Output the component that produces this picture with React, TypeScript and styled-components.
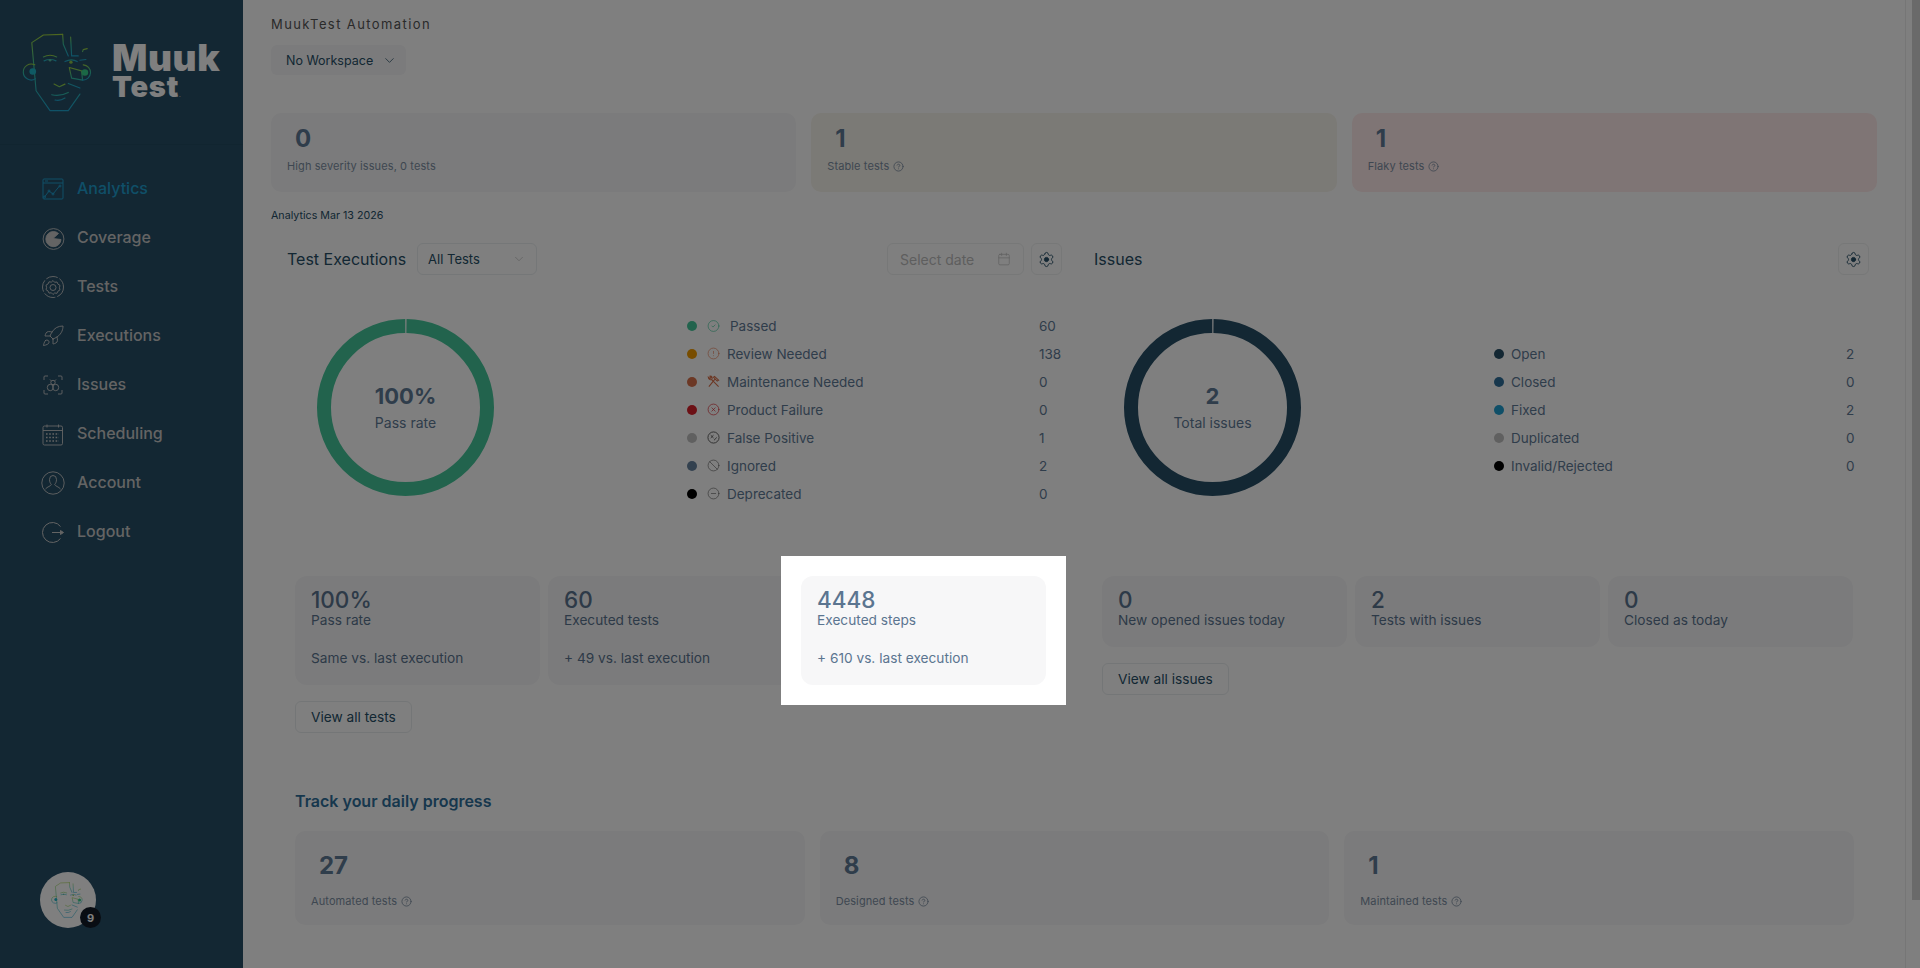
import React from 'react';
import styled, { createGlobalStyle } from 'styled-components';
import { Ban, Calendar, ChevronDown, CircleAlert, CircleCheck, CircleHelp, CircleMinus, CircleX, Rocket, Settings } from 'lucide-react';

const GlobalStyle = createGlobalStyle`
  html, body { margin: 0; height: 100%; overflow: hidden; background: #fff; }
  body { font-family: Inter, "Liberation Sans", sans-serif; color: #264e66; }
  * { box-sizing: border-box; }
`;

const FaceLogo = ({ width, height }: { width: number; height: number }) => (
  <svg width={width} height={height} viewBox="66 96 225 238" fill="none" strokeWidth="3.4" strokeLinecap="round" strokeLinejoin="round">
    <defs>
      <linearGradient id="faceStroke" x1="0" y1="0" x2="0" y2="1">
        <stop offset="0" stopColor="#9ccf3f" />
        <stop offset="0.45" stopColor="#37c3a0" />
        <stop offset="1" stopColor="#1ea5d0" />
      </linearGradient>
    </defs>
    <g stroke="url(#faceStroke)">
      <path d="M188 100 L130 102 L95 125 L108 270 L150 330 L205 330 L240 280" />
      <path d="M188 100 L190 130 L205 165 M212 108 L215 165 L235 165" />
      <path d="M248 152 L250 146 L262 143 M240 178 L258 176" />
      <path d="M208 200 L245 210 L248 238 L215 232 Z M205 248 L240 262" />
      <path d="M130 168 Q150 158 170 168 M132 180 Q150 172 168 180 M195 182 Q215 172 232 182" />
      <path d="M162 250 L178 258 L195 250 M155 282 Q180 288 205 275 M165 298 Q180 302 195 292" />
      <path d="M104 192 A24 24 0 1 0 106 234 M250 192 A23 23 0 1 1 248 238" />
    </g>
    <circle cx="98" cy="212" r="10" fill="#1fb5c9" />
    <circle cx="255" cy="215" r="10" fill="#37d18d" />
    <circle cx="150" cy="178" r="4" fill="#58bfa0" />
    <circle cx="213" cy="184" r="5" fill="#8fc24a" />
  </svg>
);

const AnalyticsIcon = () => (
  <svg width="24" height="24" viewBox="0 0 24 24" fill="none" stroke="currentColor" strokeWidth="1">
    <rect x="2" y="2" width="20" height="20" rx="1" />
    <path d="M2 6h20M4 4h3" />
    <path d="M3.5 20 L8 14 L12 17 L18.5 9" />
    <circle cx="8" cy="14" r="1" /><circle cx="12" cy="17" r="1" /><circle cx="19" cy="9" r="1" /><circle cx="3.5" cy="20" r="1" />
  </svg>
);
const CoverageIcon = () => (
  <svg width="24" height="24" viewBox="0 0 24 24" stroke="currentColor" strokeWidth="0.9" fill="none">
    <circle cx="12.5" cy="13" r="10.4" />
    <path d="M12.500 5.500 A7.600 7.600 0 1 0 20 13.500 L12 12.500 L17.500 7.500 A7.600 7.600 0 0 0 12.500 5.500Z" fill="currentColor" />
  </svg>
);
const TestsIcon = () => (
  <svg width="24" height="24" viewBox="0 0 24 24" fill="none" stroke="currentColor" strokeWidth="0.9">
    <circle cx="12" cy="12" r="10.5" strokeDasharray="12 2" />
    <path d="M12 5.500l1.600 1.800 2.400-.3 1 2.200 2 1.200-.6 2.300.6 2.200-2 1.200-1 2.200-2.400-.3L12 19.500l-1.600-1.700-2.400.3-1-2.200-2-1.200.6-2.200-.6-2.300 2-1.200 1-2.200 2.400.3z" />
    <circle cx="12" cy="12.500" r="3" />
  </svg>
);
const IssuesIcon = () => (
  <svg width="24" height="24" viewBox="0 0 24 24" fill="none" stroke="currentColor" strokeWidth="0.9">
    <path d="M3 7V4a1 1 0 0 1 1-1h3M17 3h3a1 1 0 0 1 1 1v3M21 17v3a1 1 0 0 1-1 1h-3M7 21H4a1 1 0 0 1-1-1v-3" />
    <circle cx="12" cy="9.500" r="2.200" />
    <ellipse cx="9.300" cy="14.500" rx="3" ry="3.200" /><ellipse cx="14.700" cy="14.500" rx="3" ry="3.200" />
    <path d="M9 6.500l1.300 1.400M15 6.500l-1.300 1.400" />
  </svg>
);
const CalendarIcon = () => (
  <svg width="24" height="24" viewBox="0 0 24 24" fill="none" stroke="currentColor" strokeWidth="0.9">
    <rect x="2" y="4" width="19.500" height="19" rx="1.500" />
    <path d="M2 8.500h19.500M6 2.500v3M17.500 2.500v3" />
    <path d="M5 12h13M5 15.500h13M5 19h13" strokeDasharray="1.600 1.600" strokeWidth="1.500" />
  </svg>
);
const AccountIcon = () => (
  <svg width="24" height="24" viewBox="0 0 24 24" fill="none" stroke="currentColor" strokeWidth="0.9">
    <circle cx="12" cy="12" r="11.200" />
    <path d="M8.500 8.500a3.500 4 0 0 1 7 0c0 2.500-1 4-1.800 5 .1 1.500 4.300 2.300 5.800 4.500M8.500 8.500c0 2.500 1 4 1.800 5 -.1 1.500-4.300 2.300-5.800 4.500" />
  </svg>
);
const LogoutIcon = () => (
  <svg width="24" height="24" viewBox="0 0 24 24" fill="none" stroke="currentColor" strokeWidth="1">
    <path d="M19.500 6.500A10 10 0 1 0 19.500 18.500" />
    <path d="M11 12.500h11" /><path d="M19.500 10.500l3 2-3 2z" fill="currentColor" />
  </svg>
);
const WrenchIcon = () => (
  <svg width="13" height="13" viewBox="0 0 14 14" fill="none" stroke="currentColor" strokeWidth="1.200">
    <path d="M2 12.500L9 4M8 1.500l4.500 4-1.500 1-4-4z" />
    <path d="M12.500 12.500L5 5M5 5C3.500 5.500 1.800 4.500 1.500 2.500L3.200 3.700 4.300 2.800 3.200 1.300C5 1 6.500 3 5 5z" />
  </svg>
);
const FalsePositiveIcon = () => (
  <svg width="13" height="13" viewBox="0 0 14 14" fill="none" stroke="currentColor" strokeWidth="1">
    <circle cx="7" cy="7" r="6" />
    <path d="M4 4.500l3 3M7 4.500l-3 3M7.500 10l3-3M8 7.500l.1.100M10 9.900l.1.100" />
  </svg>
);

const Shell = styled.div`
  display: flex;
  height: 100vh;
`;

const Sidebar = styled.aside`
  width: 243px;
  flex: none;
  display: flex;
  flex-direction: column;
  background: #264e66;
`;

const Brand = styled.div`
  height: 145px;
  display: flex;
  align-items: flex-start;
  gap: 15px;
  padding: 33px 0 0 22px;
  border-bottom: 1px solid #234a61;
`;

const BrandName = styled.div`
  display: flex;
  flex-direction: column;
  padding-top: 7px;
  color: #fff;
  font-family: Inter, sans-serif;
  font-weight: 900;
`;

const BrandTop = styled.span`
  font-size: 37px;
  line-height: 36px;
  letter-spacing: 0.6px;
`;

const BrandBottom = styled.span`
  font-size: 29px;
  line-height: 21px;
  letter-spacing: 0.8px;
  sup { font-size: 6px; font-weight: 400; letter-spacing: 0; vertical-align: baseline; }
`;

const Nav = styled.nav`
  display: flex;
  flex-direction: column;
  padding: 18px 0 0 41px;
`;

const NavItem = styled.a<{ $active?: boolean }>`
  height: 49px;
  display: flex;
  align-items: center;
  gap: 12px;
  font-size: 16px;
  font-weight: 500;
  color: ${p => (p.$active ? '#1f9fd0' : '#c8c8c8')};
  svg { flex: none; margin-top: 3px; }
`;

const AvatarWrap = styled.div`
  position: relative;
  width: 56px;
  height: 56px;
  margin: auto 0 40px 40px;
  border-radius: 50%;
  background: #fff;
  display: flex;
  align-items: center;
  justify-content: center;
`;

const AvatarBadge = styled.span`
  position: absolute;
  right: -5px;
  bottom: 0;
  width: 21px;
  height: 21px;
  border-radius: 50%;
  background: #131a26;
  color: #fff;
  font-size: 11px;
  font-weight: 700;
  display: flex;
  align-items: center;
  justify-content: center;
`;

const Main = styled.main`
  flex: 1;
  min-width: 0;
  display: flex;
  overflow: hidden;
`;

const Content = styled.div`
  flex: 1;
  min-width: 0;
  padding: 16px 28px 0;
`;

const ScrollRail = styled.div`
  width: 15px;
  flex: none;
  display: flex;
  justify-content: flex-end;
  border-left: 1px solid #ececec;
`;

const ScrollThumb = styled.div`
  width: 8px;
  height: 900px;
  background: #d4d4d4;
`;

const OrgName = styled.div`
  font-size: 13px;
  line-height: 16px;
  letter-spacing: 1.4px;
  color: #555;
`;

const WorkspaceButton = styled.button`
  margin-top: 13px;
  width: 135px;
  height: 30px;
  padding: 0 0 0 15px;
  display: flex;
  align-items: center;
  gap: 9px;
  border: none;
  border-radius: 6px;
  background: #f7f7f8;
  color: #264e66;
  font-family: inherit;
  font-size: 12.5px;
  white-space: nowrap;
`;

const SummaryRow = styled.div`
  margin-top: 38px;
  display: grid;
  grid-template-columns: repeat(3, 1fr);
  gap: 15px;
`;

const SummaryCard = styled.div<{ $tone?: string }>`
  height: 79px;
  padding: 12px 16px 0;
  border-radius: 10px;
  background: ${p => p.$tone || '#f7f7f8'};
`;

const BigNumber = styled.div`
  padding-left: 8px;
  font-size: 24px;
  line-height: 27px;
  font-weight: 700;
  color: #5f7a96;
`;

const TinyLabel = styled.div<{ $gap: number }>`
  margin-top: ${p => p.$gap}px;
  display: flex;
  align-items: center;
  gap: 4px;
  font-size: 11px;
  line-height: 14px;
  letter-spacing: 0.1px;
  color: #7d8fa3;
  svg { flex: none; }
`;

const DateNote = styled.div`
  margin-top: 16px;
  font-size: 10.7px;
  line-height: 16px;
  color: #264e66;
`;

const Panels = styled.div`
  margin: 8px -8px 0 0;
  display: grid;
  grid-template-columns: 1fr 1fr;
`;

const Panel = styled.section`
  min-height: 528px;
  padding: 11px 16px;
`;

const PanelHead = styled.div`
  display: flex;
  align-items: center;
  height: 32px;
`;

const PanelTitle = styled.h2`
  margin: 0;
  font-size: 16px;
  font-weight: 400;
  color: #264e66;
`;

const SelectBox = styled.div`
  margin-left: 11px;
  width: 120px;
  height: 32px;
  padding: 0 10px;
  display: flex;
  align-items: center;
  justify-content: space-between;
  border: 1px solid #eaeef0;
  border-radius: 6px;
  font-size: 13px;
  color: #264e66;
  svg { color: #bbb; }
`;

const DateBox = styled.div`
  margin-left: auto;
  width: 137px;
  height: 32px;
  padding: 0 12px;
  display: flex;
  align-items: center;
  justify-content: space-between;
  border: 1px solid #eef0f0;
  border-radius: 6px;
  font-size: 14px;
  color: #bdbdbd;
  svg { color: #bdbdbd; }
`;

const GearButton = styled.button<{ $push?: boolean }>`
  margin-left: ${p => (p.$push ? 'auto' : '7px')};
  width: 31px;
  height: 32px;
  padding: 0;
  display: flex;
  align-items: center;
  justify-content: center;
  border: 1px solid #eef0f0;
  border-radius: 6px;
  background: transparent;
  color: #264e66;
  circle { fill: currentColor; }
`;

const ChartRow = styled.div`
  margin-top: 44px;
  display: grid;
  grid-template-columns: 400px 1fr;
  grid-template-rows: 177px;
`;

const DonutWrap = styled.div`
  position: relative;
  width: 177px;
  height: 177px;
  margin-left: 30px;
`;

const DonutCenter = styled.div`
  position: absolute;
  inset: 0 0 1px;
  display: flex;
  flex-direction: column;
  align-items: center;
  justify-content: center;
`;

const DonutValue = styled.div`
  font-size: 22px;
  line-height: 28px;
  font-weight: 700;
  color: #5f7a96;
`;

const DonutLabel = styled.div`
  font-size: 14px;
  line-height: 20px;
  margin-top: 3px;
  color: #5f7a96;
`;

const Legend = styled.div`
  height: 177px;
  display: flex;
  flex-direction: column;
  justify-content: center;
  padding-top: 4px;
`;

const LegendRow = styled.div`
  height: 28px;
  flex: none;
  display: flex;
  align-items: center;
  font-size: 13.5px;
  color: #5f7a96;
`;

const Dot = styled.span<{ $color: string }>`
  width: 10px;
  height: 10px;
  flex: none;
  border-radius: 50%;
  background: ${p => p.$color};
`;

const StatusIcon = styled.span<{ $color: string }>`
  width: 13px;
  margin-left: 10px;
  flex: none;
  display: flex;
  color: ${p => p.$color};
`;

const LegendName = styled.span<{ $gap?: number }>`
  margin-left: ${p => p.$gap ?? 7}px;
`;

const LegendValue = styled.span`
  margin-left: auto;
  width: 23px;
  flex: none;
  white-space: nowrap;
`;

const StatGrid = styled.div`
  margin-top: 80px;
  padding: 0 16px 0 8px;
  display: grid;
  grid-template-columns: repeat(3, 1fr);
  gap: 8px;
`;

const StatCard = styled.div<{ $raised?: boolean }>`
  padding: 13px 16px 18px;
  border-radius: 12px;
  background: #f7f7f8;
  color: #5b7590;
  ${p => p.$raised && 'position: relative; z-index: 1002;'}
`;

const StatNumber = styled.div`
  font-size: 22.5px;
  line-height: 22px;
  font-weight: 500;
`;

const StatLabel = styled.div`
  font-size: 13.7px;
  line-height: 18px;
`;

const StatDelta = styled.div`
  margin-top: 20px;
  font-size: 13.7px;
  line-height: 18px;
`;

const OutlineButton = styled.button`
  margin: 16px 0 0 8px;
  height: 32px;
  padding: 0 15px;
  border: 1px solid #e9edef;
  border-radius: 6px;
  background: transparent;
  color: #264e66;
  font-family: inherit;
  font-size: 13.7px;
`;

const TrackSection = styled.section`
  padding: 31px 23px 0 24px;
`;

const TrackTitle = styled.h3`
  margin: 0;
  font-size: 16px;
  line-height: 20px;
  font-weight: 600;
  color: #2f6f9b;
`;

const TrackGrid = styled.div`
  margin-top: 20px;
  display: grid;
  grid-template-columns: repeat(3, 1fr);
  gap: 15px;
`;

const TrackCard = styled.div`
  height: 94px;
  padding: 21px 16px 0;
  border-radius: 10px;
  background: #f7f7f8;
`;

const Spotlight = styled.div`
  position: fixed;
  left: 781px;
  top: 556px;
  width: 285px;
  height: 149px;
  background: #fff;
  box-shadow: 0 0 0 3000px rgba(0, 0, 0, 0.5);
  z-index: 1001;
`;

const navItems = [
  { label: 'Analytics', icon: <AnalyticsIcon />, active: true },
  { label: 'Coverage', icon: <CoverageIcon /> },
  { label: 'Tests', icon: <TestsIcon /> },
  { label: 'Executions', icon: <Rocket size={24} strokeWidth={0.9} /> },
  { label: 'Issues', icon: <IssuesIcon /> },
  { label: 'Scheduling', icon: <CalendarIcon /> },
  { label: 'Account', icon: <AccountIcon /> },
  { label: 'Logout', icon: <LogoutIcon /> },
];

const testLegend = [
  { name: 'Passed', value: '60', dot: '#45c79a', tint: '#45c79a', gap: 10, icon: <CircleCheck size={14} strokeWidth={1.2} /> },
  { name: 'Review Needed', value: '138', dot: '#f09a00', tint: '#e8805a', icon: <CircleAlert size={13} strokeWidth={1.2} /> },
  { name: 'Maintenance Needed', value: '0', dot: '#d9714a', tint: '#d9714a', icon: <WrenchIcon /> },
  { name: 'Product Failure', value: '0', dot: '#d9202a', tint: '#d9202a', icon: <CircleX size={13} strokeWidth={1.2} /> },
  { name: 'False Positive', value: '1', dot: '#c0c0c0', tint: '#5a5a5a', icon: <FalsePositiveIcon /> },
  { name: 'Ignored', value: '2', dot: '#66829f', tint: '#5a5a5a', icon: <Ban size={13} strokeWidth={1.1} /> },
  { name: 'Deprecated', value: '0', dot: '#000', tint: '#5a5a5a', icon: <CircleMinus size={13} strokeWidth={1.1} /> },
];

const issueLegend = [
  { name: 'Open', value: '2', dot: '#264e66' },
  { name: 'Closed', value: '0', dot: '#2f6f9b' },
  { name: 'Fixed', value: '2', dot: '#1f9fd0' },
  { name: 'Duplicated', value: '0', dot: '#c0c0c0' },
  { name: 'Invalid/Rejected', value: '0', dot: '#000' },
];

const testStats = [
  { number: '100%', label: 'Pass rate', delta: 'Same vs. last execution' },
  { number: '60', label: 'Executed tests', delta: '+ 49 vs. last execution' },
  { number: '4448', label: 'Executed steps', delta: '+ 610 vs. last execution', raised: true },
];

const issueStats = [
  { number: '0', label: 'New opened issues today' },
  { number: '2', label: 'Tests with issues' },
  { number: '0', label: 'Closed as today' },
];

const track = [
  { number: '27', label: 'Automated tests' },
  { number: '8', label: 'Designed tests' },
  { number: '1', label: 'Maintained tests' },
];

const Donut = ({ color, value, label }: { color: string; value: string; label: string }) => (
  <DonutWrap>
    <svg width="177" height="177" viewBox="0 0 177 177">
      <circle cx="88.5" cy="88.5" r="81.5" fill="none" stroke={color} strokeWidth="14" strokeDasharray="510 2.08" strokeDashoffset="-1" transform="rotate(-90 88.5 88.5)" />
    </svg>
    <DonutCenter>
      <DonutValue>{value}</DonutValue>
      <DonutLabel>{label}</DonutLabel>
    </DonutCenter>
  </DonutWrap>
);

export default function App() {
  return (
    <Shell>
      <GlobalStyle />
      <Sidebar>
        <Brand>
          <FaceLogo width={75} height={79} />
          <BrandName>
            <BrandTop>Muuk</BrandTop>
            <BrandBottom>Test<sup>.</sup></BrandBottom>
          </BrandName>
        </Brand>
        <Nav>
          {navItems.map(item => (
            <NavItem key={item.label} $active={item.active}>
              {item.icon}
              {item.label}
            </NavItem>
          ))}
        </Nav>
        <AvatarWrap>
          <FaceLogo width={34} height={36} />
          <AvatarBadge>9</AvatarBadge>
        </AvatarWrap>
      </Sidebar>

      <Main>
        <Content>
          <OrgName>MuukTest Automation</OrgName>
          <WorkspaceButton>
            No Workspace
            <ChevronDown size={15} strokeWidth={1.2} />
          </WorkspaceButton>

          <SummaryRow>
            <SummaryCard>
              <BigNumber>0</BigNumber>
              <TinyLabel $gap={7}>High severity issues, 0 tests</TinyLabel>
            </SummaryCard>
            <SummaryCard $tone="#f7f4ec">
              <BigNumber>1</BigNumber>
              <TinyLabel $gap={7}>Stable tests <CircleHelp size={11} strokeWidth={1.8} /></TinyLabel>
            </SummaryCard>
            <SummaryCard $tone="#ffeaea">
              <BigNumber>1</BigNumber>
              <TinyLabel $gap={7}>Flaky tests <CircleHelp size={11} strokeWidth={1.8} /></TinyLabel>
            </SummaryCard>
          </SummaryRow>

          <DateNote>Analytics Mar 13 2026</DateNote>

          <Panels>
            <Panel>
              <PanelHead>
                <PanelTitle>Test Executions</PanelTitle>
                <SelectBox>
                  All Tests
                  <ChevronDown size={14} strokeWidth={1.2} />
                </SelectBox>
                <DateBox>
                  Select date
                  <Calendar size={14} strokeWidth={1.2} />
                </DateBox>
                <GearButton><Settings size={17} strokeWidth={1.3} /></GearButton>
              </PanelHead>
              <ChartRow>
                <Donut color="#45c79a" value="100%" label="Pass rate" />
                <Legend>
                  {testLegend.map(row => (
                    <LegendRow key={row.name}>
                      <Dot $color={row.dot} />
                      <StatusIcon $color={row.tint}>{row.icon}</StatusIcon>
                      <LegendName $gap={row.gap}>{row.name}</LegendName>
                      <LegendValue>{row.value}</LegendValue>
                    </LegendRow>
                  ))}
                </Legend>
              </ChartRow>
              <StatGrid>
                {testStats.map(stat => (
                  <StatCard key={stat.label} $raised={stat.raised}>
                    <StatNumber>{stat.number}</StatNumber>
                    <StatLabel>{stat.label}</StatLabel>
                    <StatDelta>{stat.delta}</StatDelta>
                  </StatCard>
                ))}
              </StatGrid>
              <OutlineButton>View all tests</OutlineButton>
            </Panel>

            <Panel>
              <PanelHead>
                <PanelTitle>Issues</PanelTitle>
                <GearButton $push><Settings size={17} strokeWidth={1.3} /></GearButton>
              </PanelHead>
              <ChartRow>
                <Donut color="#264e66" value="2" label="Total issues" />
                <Legend>
                  {issueLegend.map(row => (
                    <LegendRow key={row.name}>
                      <Dot $color={row.dot} />
                      <LegendName>{row.name}</LegendName>
                      <LegendValue>{row.value}</LegendValue>
                    </LegendRow>
                  ))}
                </Legend>
              </ChartRow>
              <StatGrid>
                {issueStats.map(stat => (
                  <StatCard key={stat.label}>
                    <StatNumber>{stat.number}</StatNumber>
                    <StatLabel>{stat.label}</StatLabel>
                  </StatCard>
                ))}
              </StatGrid>
              <OutlineButton>View all issues</OutlineButton>
            </Panel>
          </Panels>

          <TrackSection>
            <TrackTitle>Track your daily progress</TrackTitle>
            <TrackGrid>
              {track.map(item => (
                <TrackCard key={item.label}>
                  <BigNumber>{item.number}</BigNumber>
                  <TinyLabel $gap={15}>{item.label} <CircleHelp size={11} strokeWidth={1.8} /></TinyLabel>
                </TrackCard>
              ))}
            </TrackGrid>
          </TrackSection>
        </Content>
        <ScrollRail><ScrollThumb /></ScrollRail>
      </Main>
      <Spotlight />
    </Shell>
  );
}
